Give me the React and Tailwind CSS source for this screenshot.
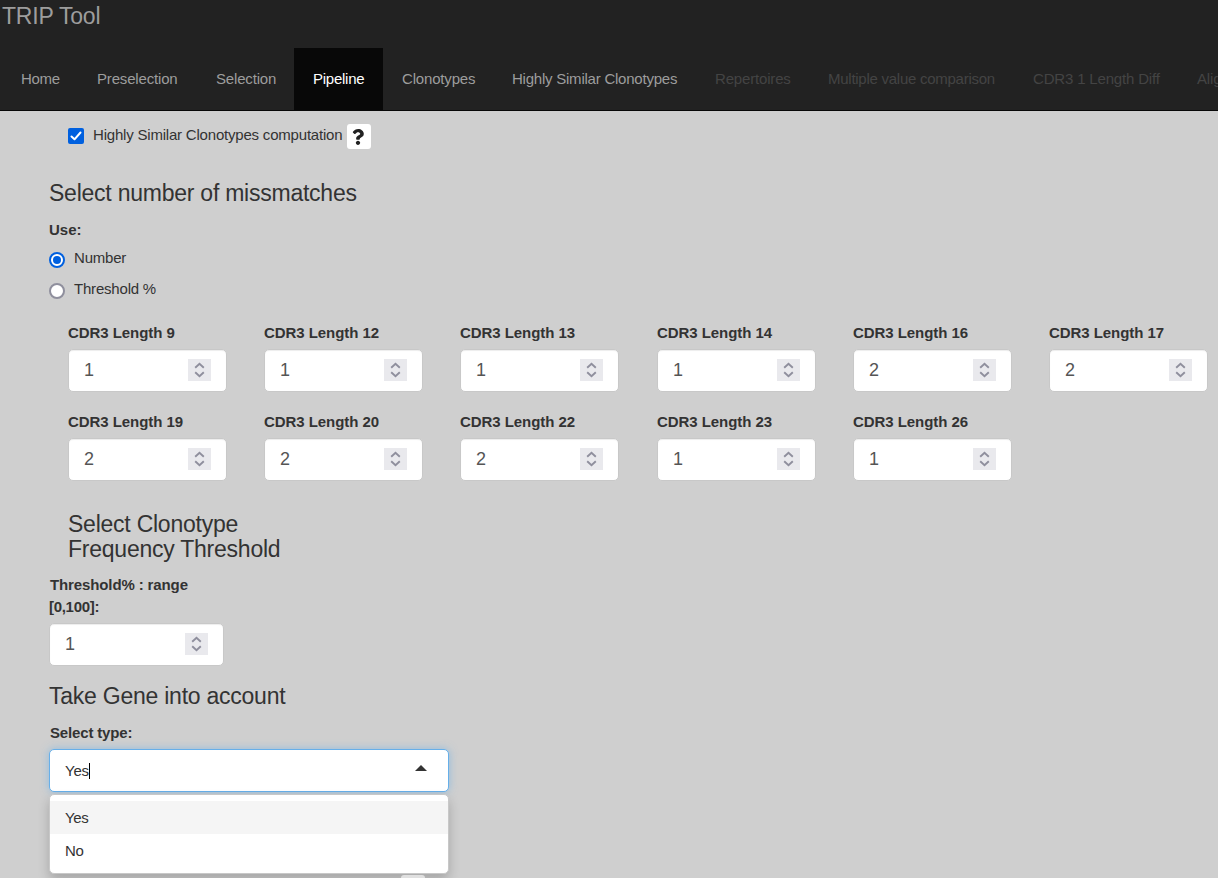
import React from "react";
import { FaQuestion } from "react-icons/fa";

const tabs = [
  { label: "Home", width: "w-[76px]", tone: "text-[#9d9d9d] tracking-[-0.3px]" },
  { label: "Preselection", width: "w-[119px]", tone: "text-[#9d9d9d]" },
  { label: "Selection", width: "w-[97px]", tone: "text-[#9d9d9d]" },
  { label: "Pipeline", width: "w-[89px]", tone: "bg-[#080808] text-white tracking-[-0.25px]" },
  { label: "Clonotypes", width: "w-[110px]", tone: "text-[#9d9d9d]" },
  { label: "Highly Similar Clonotypes", width: "w-[203px]", tone: "text-[#9d9d9d] tracking-[-0.23px]" },
  { label: "Repertoires", width: "w-[113px]", tone: "text-[#444444]" },
  { label: "Multiple value comparison", width: "w-[205px]", tone: "text-[#444444] tracking-[-0.26px]" },
  { label: "CDR3 1 Length Diff", width: "w-[164px]", tone: "text-[#444444]" },
  { label: "Alignment", width: "w-[110px]", tone: "text-[#444444]" },
];

const lengths = [
  [9, 1], [12, 1], [13, 1], [14, 1], [16, 2], [17, 2],
  [19, 2], [20, 2], [22, 2], [23, 1], [26, 1],
];

function Spinner() {
  return (
    <span className="flex h-[22px] w-[23px] items-center justify-center bg-[#e9e9ed]">
      <svg width="11" height="16" viewBox="0 0 11 16" fill="none" stroke="#8f8f9d" strokeWidth="1.9">
        <path d="M1.2 5.8 5.5 1.9 9.8 5.8M1.2 10.2 5.5 14.1 9.8 10.2" />
      </svg>
    </span>
  );
}

function NumberBox({ value }) {
  return (
    <div className="flex h-[43px] items-center justify-between rounded-[5px] border border-[#c8c8c8] bg-white px-[15px] pb-[2px] text-[18px] text-[#555555] shadow-[inset_0_1px_1px_rgba(0,0,0,0.075)]">
      <span className="leading-[22px]">{value}</span>
      <Spinner />
    </div>
  );
}

function Heading({ children }) {
  return <h3 className="text-[23px] leading-[25px] font-normal tracking-[-0.24px]">{children}</h3>;
}

export default function App() {
  return (
    <div className="flex h-[878px] w-[1218px] flex-col overflow-hidden bg-[#cfcfcf] font-['Liberation_Sans',Arial,sans-serif] text-[15px] leading-[22px] text-[#333333]">
      <header className="h-[111px] shrink-0 border-b border-[#080808] bg-[#222222]">
        <div className="h-12 pt-[4px] pl-[2px] text-[23px] leading-[25px] tracking-[-0.2px] text-[#9d9d9d]">TRIP Tool</div>
        <nav className="flex h-[62px] pl-[2px] tracking-[-0.17px]">
          {tabs.map((t) => (
            <a key={t.label} className={`flex shrink-0 items-center pl-[19px] whitespace-nowrap ${t.width} ${t.tone}`}>
              {t.label}
            </a>
          ))}
        </nav>
      </header>

      <main className="flex flex-col pl-[49px]">
        <div className="mt-[13px] flex h-[25px] items-start pl-[19px]">
          <span className="mt-[4px] flex h-4 w-4 items-center justify-center rounded-[2px] bg-[#0060df]">
            <svg width="12" height="12" viewBox="0 0 12 12" fill="none" stroke="#ffffff" strokeWidth="2" strokeLinecap="round" strokeLinejoin="round">
              <path d="M1.5 6.5 4.5 9.3 10.5 2.5" />
            </svg>
          </span>
          <span className="w-[263px] pl-[9px] tracking-[-0.2px] whitespace-nowrap">Highly Similar Clonotypes computation</span>
          <span className="flex h-[25px] w-[24px] items-center justify-center rounded-[3px] bg-white pr-[2px]">
            <FaQuestion size={16} color="#222222" />
          </span>
        </div>

        <div className="mt-[32px]"><Heading>Select number of missmatches</Heading></div>
        <div className="mt-[13px] font-bold">Use:</div>
        <div className="mt-[6px] flex h-[22px]">
          <span className="mt-[5px] flex h-4 w-4 items-center justify-center rounded-full border-2 border-[#0060df] bg-white">
            <span className="h-2 w-2 rounded-full bg-[#0060df]" />
          </span>
          <span className="pl-[9px] tracking-[-0.2px]">Number</span>
        </div>
        <div className="mt-[9px] flex h-[22px]">
          <span className="mt-[5px] h-4 w-4 rounded-full border-2 border-[#8f8f9d] bg-white" />
          <span className="pl-[9px] tracking-[-0.2px]">Threshold %</span>
        </div>

        <div className="mt-[22px] grid grid-cols-[196px_196px_197px_196px_196px_196px] gap-y-[19px] pl-[19px]">
          {lengths.map(([n, v]) => (
            <div key={n} className="h-[70px] w-[159px]">
              <div className="h-[27px] font-bold tracking-[-0.06px] whitespace-nowrap">CDR3 Length {n}</div>
              <NumberBox value={v} />
            </div>
          ))}
        </div>

        <div className="mt-[31px] w-[260px] pl-[19px]">
          <Heading>Select Clonotype Frequency Threshold</Heading>
        </div>
        <div className="mt-[12px] w-[175px]">
          <div className="mb-[5px] font-bold tracking-[-0.12px]"><span className="pl-px">Threshold% : range</span><br /><span className="tracking-[-0.3px]">[0,100]:</span></div>
          <NumberBox value={1} />
        </div>

        <div className="mt-[18px]"><Heading>Take Gene into account</Heading></div>
        <div className="mt-[13px] pl-px font-bold tracking-[-0.16px]">Select type:</div>
        <div className="relative mt-[5px] w-[400px]">
          <div className="flex h-[43px] items-center rounded-[5px] border border-[#66afe9] bg-white pr-[21px] pl-[15px] shadow-[0_0_8px_rgba(102,175,233,0.6)]">
            <span className="tracking-[-0.2px]">Yes</span>
            <span className="h-4 w-px bg-black" />
            <svg className="mb-[5px] ml-auto" width="12" height="6" viewBox="0 0 12 6">
              <path d="M0 6 6 0 12 6Z" fill="#333333" />
            </svg>
          </div>
          <div className="absolute top-[45px] left-0 z-10 w-[400px] rounded-[5px] border border-[#c8c8c8] bg-white py-[6px] tracking-[-0.3px] shadow-[0_6px_12px_rgba(0,0,0,0.2)]">
            <div className="h-[33px] bg-[#f5f5f5] pl-[15px] leading-[33px]">Yes</div>
            <div className="h-[33px] pl-[15px] leading-[33px]">No</div>
          </div>
          <div className="absolute top-[126px] left-[352px] z-20 h-[25px] w-[24px] rounded-[3px] bg-[#e0e0e0]" />
        </div>
      </main>
    </div>
  );
}
